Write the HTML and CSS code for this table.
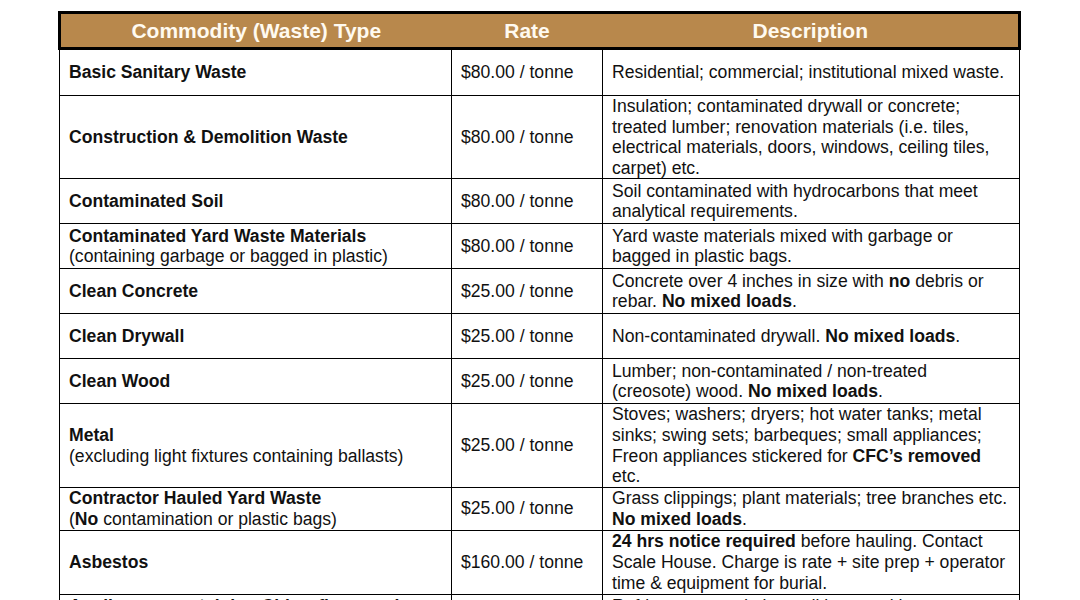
FILE: index.html
```html
<!DOCTYPE html>
<html lang="en">
<head>
<meta charset="utf-8">
<title>Commodity Rates</title>
<link rel="stylesheet" href="styles.css">
</head>
<body>
<table class="rates">
  <colgroup>
    <col class="c-type">
    <col class="c-rate">
    <col class="c-desc">
  </colgroup>
  <thead>
    <tr>
      <th>Commodity (Waste) Type</th>
      <th>Rate</th>
      <th>Description</th>
    </tr>
  </thead>
  <tbody>
    <tr class="first">
      <td class="type"><b>Basic Sanitary Waste</b></td>
      <td class="rate">$80.00 / tonne</td>
      <td class="desc">Residential; commercial; institutional mixed waste.</td>
    </tr>
    <tr>
      <td class="type"><b>Construction &amp; Demolition Waste</b></td>
      <td class="rate">$80.00 / tonne</td>
      <td class="desc">Insulation; contaminated drywall or concrete;<br>treated lumber; renovation materials (i.e. tiles,<br>electrical materials, doors, windows, ceiling tiles,<br>carpet) etc.</td>
    </tr>
    <tr>
      <td class="type"><b>Contaminated Soil</b></td>
      <td class="rate">$80.00 / tonne</td>
      <td class="desc">Soil contaminated with hydrocarbons that meet<br>analytical requirements.</td>
    </tr>
    <tr>
      <td class="type"><b>Contaminated Yard Waste Materials</b><br>(containing garbage or bagged in plastic)</td>
      <td class="rate">$80.00 / tonne</td>
      <td class="desc">Yard waste materials mixed with garbage or<br>bagged in plastic bags.</td>
    </tr>
    <tr>
      <td class="type"><b>Clean Concrete</b></td>
      <td class="rate">$25.00 / tonne</td>
      <td class="desc">Concrete over 4 inches in size with <b>no</b> debris or<br>rebar. <b>No mixed loads</b>.</td>
    </tr>
    <tr>
      <td class="type"><b>Clean Drywall</b></td>
      <td class="rate">$25.00 / tonne</td>
      <td class="desc">Non-contaminated drywall. <b>No mixed loads</b>.</td>
    </tr>
    <tr>
      <td class="type"><b>Clean Wood</b></td>
      <td class="rate">$25.00 / tonne</td>
      <td class="desc">Lumber; non-contaminated / non-treated<br>(creosote) wood. <b>No mixed loads</b>.</td>
    </tr>
    <tr>
      <td class="type"><b>Metal</b><br>(excluding light fixtures containing ballasts)</td>
      <td class="rate">$25.00 / tonne</td>
      <td class="desc">Stoves; washers; dryers; hot water tanks; metal<br>sinks; swing sets; barbeques; small appliances;<br>Freon appliances stickered for <b>CFC’s removed</b><br>etc.</td>
    </tr>
    <tr class="compact">
      <td class="type"><b>Contractor Hauled Yard Waste</b><br>(<b>No</b> contamination or plastic bags)</td>
      <td class="rate">$25.00 / tonne</td>
      <td class="desc">Grass clippings; plant materials; tree branches etc.<br><b>No mixed loads</b>.</td>
    </tr>
    <tr class="three">
      <td class="type"><b>Asbestos</b></td>
      <td class="rate">$160.00 / tonne</td>
      <td class="desc"><b>24 hrs notice required</b> before hauling. Contact<br>Scale House. Charge is rate + site prep + operator<br>time &amp; equipment for burial.</td>
    </tr>
    <tr>
      <td class="type top"><b>Appliances containing Chlorofluorocarbons</b><br>(CFCs)</td>
      <td class="rate"></td>
      <td class="desc top">Refrigerators and air conditioners without<br>CFC removal stickers.</td>
    </tr>
  </tbody>
</table>
</body>
</html>
```

FILE: styles.css
```css
html, body {
  margin: 0;
  padding: 0;
  background: #ffffff;
}

body {
  font-family: "Liberation Sans", Arial, sans-serif;
  color: #111111;
}

.rates {
  border-collapse: collapse;
  table-layout: fixed;
  width: 963px;
  margin: 11px 0 0 58px;
}

.c-type { width: 392px; }
.c-rate { width: 151px; }
.c-desc { width: 417px; }

.rates th {
  background: #b8884c;
  color: #fffaf0;
  font-size: 21px;
  font-weight: bold;
  line-height: 24px;
  height: 24px;
  padding: 5px 0 4px;
  text-align: center;
  border-top: 3px solid #000;
  border-bottom: 3px solid #000;
}

.rates th:first-child { border-left: 3px solid #000; }
.rates th:last-child { border-right: 3px solid #000; }

.rates tbody tr {
  height: 45px;
}

.rates tbody tr.first {
  height: 47px;
}

.rates tbody tr.compact {
  height: 43px;
}

.rates tbody tr.three {
  height: 64px;
}

.rates td {
  border: 1px solid #000;
  font-size: 17.6px;
  line-height: 20.6px;
  padding: 0 4px 0 9px;
  vertical-align: middle;
  white-space: nowrap;
  overflow: hidden;
}

.rates td.top {
  vertical-align: top;
  padding-top: 1px;
}
```
